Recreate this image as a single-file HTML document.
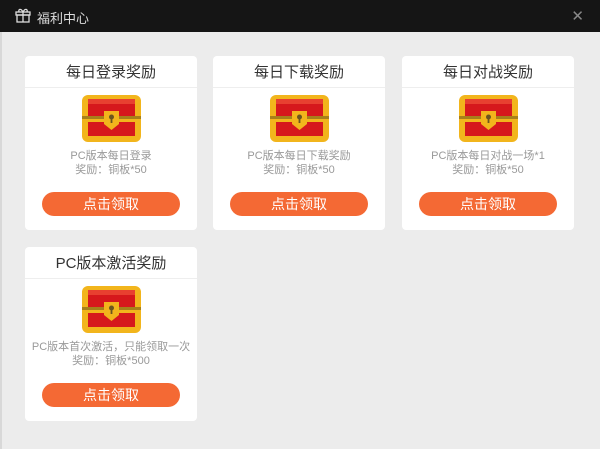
<!DOCTYPE html><html><head><meta charset="utf-8"><style>
body{margin:0;width:600px;height:449px;overflow:hidden;background:#ececec;font-family:"Liberation Sans","Noto Sans CJK SC",sans-serif;position:relative}
.top{position:absolute;left:0;top:0;width:600px;height:32px;background:#151515}
.top .t{position:absolute;left:37px;top:8px;color:#ddd;font-size:13px}
.top .x{position:absolute;right:16px;top:7px;color:#888;font-size:15px}
.lb{position:absolute;left:0;top:32px;width:2px;height:417px;background:#d8d8d8}
.card{position:absolute;width:172px;height:174px;background:#fff;border-radius:4px}
.card h3{margin:0;height:31px;line-height:34px;text-align:center;font-weight:normal;font-size:15px;color:#333;border-bottom:1px solid #eee}
.card svg{position:absolute;left:57px;top:39px}
.card .d{position:absolute;top:93px;width:100%;text-align:center;font-size:11px;color:#999;line-height:14px}
.card .b{position:absolute;left:17px;top:136px;width:138px;height:24px;border-radius:12px;background:#f46934;color:#fff;text-align:center;line-height:24px;font-size:14px}
</style></head><body>
<div class="top"><svg style="position:absolute;left:15px;top:8px" width="16" height="15" viewBox="0 0 16 15" fill="none" stroke="#ddd" stroke-width="1.3"><rect x="1" y="4" width="14" height="3"/><rect x="2" y="7" width="12" height="7"/><path d="M8 4V14M8 4C6 0 3 1 4 4M8 4C10 0 13 1 12 4"/></svg><span class="t">福利中心</span><span class="x">✕</span></div>
<div class="lb"></div>
<svg width="0" height="0" style="position:absolute"><defs><g id="c"><rect x="0" y="0" width="59" height="47" rx="6" fill="#f2b51c"/><path d="M6 4h47v18H6z" fill="#d6181c"/><rect x="6" y="4" width="47" height="5" fill="#e84030"/><rect x="6" y="27" width="47" height="14" fill="#d6181c"/><rect x="0" y="21" width="59" height="3" fill="#a7801a"/><path d="M22 16h15v13l-7.5 6-7.5-6z" fill="#f2b51c"/><circle cx="29.5" cy="22" r="2.5" fill="#6b5520"/><rect x="28.6" y="23" width="1.8" height="5" fill="#6b5520"/></g></defs></svg>
<div class="card" style="left:25px;top:56px"><h3>每日登录奖励</h3><svg width="59" height="47"><use href="#c"/></svg><div class="d">PC版本每日登录<br>奖励：铜板*50</div><div class="b">点击领取</div></div>
<div class="card" style="left:213px;top:56px"><h3>每日下载奖励</h3><svg width="59" height="47"><use href="#c"/></svg><div class="d">PC版本每日下载奖励<br>奖励：铜板*50</div><div class="b">点击领取</div></div>
<div class="card" style="left:402px;top:56px"><h3>每日对战奖励</h3><svg width="59" height="47"><use href="#c"/></svg><div class="d">PC版本每日对战一场*1<br>奖励：铜板*50</div><div class="b">点击领取</div></div>
<div class="card" style="left:25px;top:247px"><h3>PC版本激活奖励</h3><svg width="59" height="47"><use href="#c"/></svg><div class="d">PC版本首次激活，只能领取一次<br>奖励：铜板*500</div><div class="b">点击领取</div></div>
</body></html>
